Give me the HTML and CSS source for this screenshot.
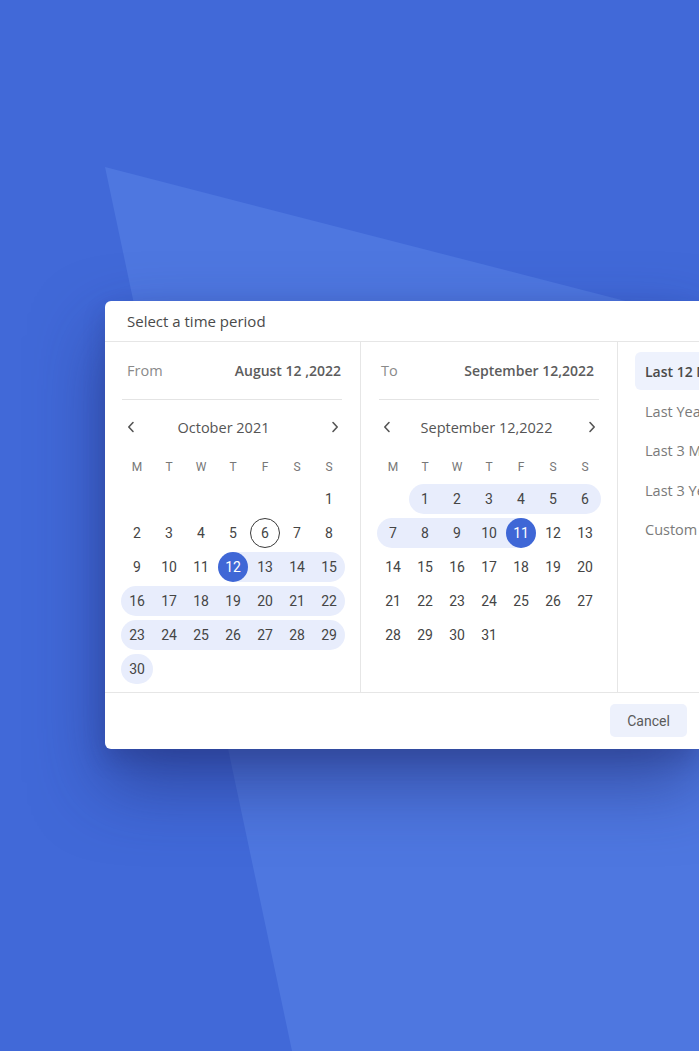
FILE: index.html
```html
<!DOCTYPE html>
<html lang="en">
<head>
<meta charset="utf-8">
<title>Select a time period</title>
<link rel="stylesheet" href="styles.css">
</head>
<body>
<div class="stage">
  <div class="card">
    <div class="card-head">Select a time period</div>
    <div class="card-body">
      <div class="cal-col">
        <div class="range-row range-row--from">
          <span class="range-lbl">From</span>
          <span class="range-val">August 12 ,2022</span>
        </div>
        <div class="month-nav">
          <span class="chev"><svg width="8" height="12" viewBox="0 0 8 12"><path d="M6 1.5 1.8 6 6 10.5" fill="none" stroke="#555" stroke-width="1.6" stroke-linecap="round" stroke-linejoin="round"/></svg></span>
          <span class="month-title month-title--a">October 2021</span>
          <span class="chev"><svg width="8" height="12" viewBox="0 0 8 12"><path d="M2 1.5 6.2 6 2 10.5" fill="none" stroke="#555" stroke-width="1.6" stroke-linecap="round" stroke-linejoin="round"/></svg></span>
        </div>
        <div class="grid">
          <span class="wd">M</span><span class="wd">T</span><span class="wd">W</span><span class="wd">T</span><span class="wd">F</span><span class="wd">S</span><span class="wd">S</span>
          <span class="d"></span><span class="d"></span><span class="d"></span><span class="d"></span><span class="d"></span><span class="d"></span><span class="d"><span class="n">1</span></span>
          <span class="d"><span class="n">2</span></span><span class="d"><span class="n">3</span></span><span class="d"><span class="n">4</span></span><span class="d"><span class="n">5</span></span><span class="d"><span class="n today">6</span></span><span class="d"><span class="n">7</span></span><span class="d"><span class="n">8</span></span>
          <span class="d"><span class="n">9</span></span><span class="d"><span class="n">10</span></span><span class="d"><span class="n">11</span></span><span class="d band-start"><span class="n sel">12</span></span><span class="d in"><span class="n">13</span></span><span class="d in"><span class="n">14</span></span><span class="d in r"><span class="n">15</span></span>
          <span class="d in l"><span class="n">16</span></span><span class="d in"><span class="n">17</span></span><span class="d in"><span class="n">18</span></span><span class="d in"><span class="n">19</span></span><span class="d in"><span class="n">20</span></span><span class="d in"><span class="n">21</span></span><span class="d in r"><span class="n">22</span></span>
          <span class="d in l"><span class="n">23</span></span><span class="d in"><span class="n">24</span></span><span class="d in"><span class="n">25</span></span><span class="d in"><span class="n">26</span></span><span class="d in"><span class="n">27</span></span><span class="d in"><span class="n">28</span></span><span class="d in r"><span class="n">29</span></span>
          <span class="d in l r"><span class="n">30</span></span>
        </div>
      </div>
      <div class="cal-col">
        <div class="range-row range-row--to">
          <span class="range-lbl">To</span>
          <span class="range-val">September 12,2022</span>
        </div>
        <div class="month-nav">
          <span class="chev"><svg width="8" height="12" viewBox="0 0 8 12"><path d="M6 1.5 1.8 6 6 10.5" fill="none" stroke="#555" stroke-width="1.6" stroke-linecap="round" stroke-linejoin="round"/></svg></span>
          <span class="month-title month-title--b">September 12,2022</span>
          <span class="chev"><svg width="8" height="12" viewBox="0 0 8 12"><path d="M2 1.5 6.2 6 2 10.5" fill="none" stroke="#555" stroke-width="1.6" stroke-linecap="round" stroke-linejoin="round"/></svg></span>
        </div>
        <div class="grid">
          <span class="wd">M</span><span class="wd">T</span><span class="wd">W</span><span class="wd">T</span><span class="wd">F</span><span class="wd">S</span><span class="wd">S</span>
          <span class="d"></span><span class="d in l"><span class="n">1</span></span><span class="d in"><span class="n">2</span></span><span class="d in"><span class="n">3</span></span><span class="d in"><span class="n">4</span></span><span class="d in"><span class="n">5</span></span><span class="d in r"><span class="n">6</span></span>
          <span class="d in l"><span class="n">7</span></span><span class="d in"><span class="n">8</span></span><span class="d in"><span class="n">9</span></span><span class="d in"><span class="n">10</span></span><span class="d band-end"><span class="n sel">11</span></span><span class="d"><span class="n">12</span></span><span class="d"><span class="n">13</span></span>
          <span class="d"><span class="n">14</span></span><span class="d"><span class="n">15</span></span><span class="d"><span class="n">16</span></span><span class="d"><span class="n">17</span></span><span class="d"><span class="n">18</span></span><span class="d"><span class="n">19</span></span><span class="d"><span class="n">20</span></span>
          <span class="d"><span class="n">21</span></span><span class="d"><span class="n">22</span></span><span class="d"><span class="n">23</span></span><span class="d"><span class="n">24</span></span><span class="d"><span class="n">25</span></span><span class="d"><span class="n">26</span></span><span class="d"><span class="n">27</span></span>
          <span class="d"><span class="n">28</span></span><span class="d"><span class="n">29</span></span><span class="d"><span class="n">30</span></span><span class="d"><span class="n">31</span></span>
        </div>
      </div>
      <div class="presets">
        <div class="preset preset--active">Last 12 Months</div>
        <div class="preset">Last Year</div>
        <div class="preset">Last 3 Months</div>
        <div class="preset">Last 3 Years</div>
        <div class="preset">Custom</div>
      </div>
    </div>
    <div class="card-foot">
      <button class="btn-cancel">Cancel</button>
    </div>
  </div>
</div>
</body>
</html>
```

FILE: styles.css
```css
* { box-sizing: border-box; }
html, body { margin: 0; padding: 0; }
body {
  width: 699px;
  height: 1051px;
  overflow: hidden;
  background: #4169d8;
}
.stage {
  position: relative;
  width: 699px;
  height: 1051px;
  overflow: hidden;
  background: #4169d8;
  padding: 301px 0 0 105px;
}
.stage::before {
  content: "";
  position: absolute;
  left: 0; top: 0;
  width: 699px; height: 1051px;
  background: #4e77e0;
  clip-path: polygon(105px 167px, 699px 320px, 699px 1051px, 292px 1051px);
}
.card {
  position: relative;
  width: 594px;
  background: #fff;
  border-radius: 6px 0 0 6px;
  box-shadow: 0 34px 70px rgba(30, 40, 110, 0.55), 0 10px 22px rgba(30, 40, 110, 0.22);
  font-family: "Open Sans", "Noto Sans", sans-serif;
  color: #4a4a4a;
}
.card-head {
  height: 41px;
  border-bottom: 1px solid #e6e6e6;
  padding-left: 22px;
  display: flex;
  align-items: center;
  font-size: 15px;
  color: #4a4a4a;
}
.card-body {
  display: flex;
  border-bottom: 1px solid #e6e6e6;
}
.cal-col {
  width: 256px;
  flex: none;
  padding: 0 15px 8px 16px;
  border-right: 1px solid #e6e6e6;
}
.cal-col + .cal-col { width: 257px; }
.range-row {
  height: 58px;
  display: flex;
  align-items: center;
  justify-content: space-between;
  border-bottom: 1px solid #e4e4e4;
  font-size: 14px;
}
.range-row--from { margin: 0 3px 0 1px; padding: 0 1px 0 5px; }
.range-row--to { margin: 0 3px 0 2px; padding: 0 5px 0 2px; }
.range-lbl { color: #8a8a8a; font-size: 14.5px; }
.range-val { color: #5c5c5c; font-weight: 600; font-size: 14px; }
.month-nav {
  height: 54px;
  display: flex;
  align-items: center;
}
.chev {
  width: 20px;
  display: flex;
  justify-content: center;
  align-items: center;
}
.month-title {
  flex: 1;
  text-align: center;
  font-size: 14.5px;
  color: #555;
}
.month-title--a { padding-right: 19px; }
.month-title--b { padding-right: 6px; }
.grid {
  display: grid;
  grid-template-columns: repeat(7, 32px);
  grid-template-rows: 26px;
  grid-auto-rows: 30px;
  row-gap: 4px;
  font-family: Roboto, "Liberation Sans", sans-serif;
}
.wd {
  display: flex;
  align-items: center;
  justify-content: center;
  font-size: 12px;
  color: #777;
}
.d {
  display: flex;
  align-items: center;
  justify-content: center;
  height: 30px;
}
.n {
  width: 30px;
  height: 30px;
  border-radius: 50%;
  display: flex;
  align-items: center;
  justify-content: center;
  font-size: 14px;
  color: #454545;
}
.d.in { background: #e8edfc; }
.d.l { border-top-left-radius: 15px; border-bottom-left-radius: 15px; }
.d.r { border-top-right-radius: 15px; border-bottom-right-radius: 15px; }
.d.band-start { background: linear-gradient(to right, transparent 50%, #e8edfc 50%); }
.d.band-end { background: linear-gradient(to right, #e8edfc 50%, transparent 50%); }
.n.sel { background: #3f67d6; color: #fff; }
.n.today { border: 1px solid #3a3a3a; }
.presets {
  flex: 1;
  min-width: 0;
  padding: 10px 0 0 17px;
  overflow: hidden;
}
.preset {
  height: 39.5px;
  display: flex;
  align-items: center;
  padding-left: 10px;
  white-space: nowrap;
  font-size: 14.5px;
  color: #7a7a7a;
  border-radius: 6px 0 0 6px;
}
.preset--active {
  height: 38px;
  margin-bottom: 1.5px;
  background: #eef2fd;
  color: #4a4a4a;
  font-weight: 600;
  font-size: 14px;
}
.card-foot {
  height: 56px;
  display: flex;
  justify-content: flex-end;
  align-items: flex-start;
  padding: 11px 12px 0 0;
}
.btn-cancel {
  width: 77px;
  height: 33px;
  border: none;
  border-radius: 5px;
  background: #edf1fc;
  color: #5a5a5a;
  font-family: Roboto, "Liberation Sans", sans-serif;
  font-size: 14px;
  padding: 0;
}
```
